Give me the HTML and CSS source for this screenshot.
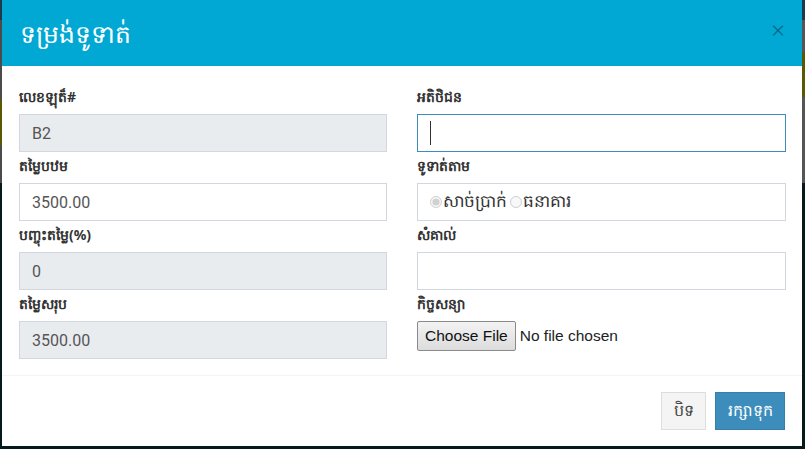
FILE: index.html
```html
<!DOCTYPE html>
<html lang="km">
<head>
<meta charset="utf-8">
<title>ទម្រង់ទូទាត់</title>
<link rel="stylesheet" href="styles.css">
</head>
<body>
<div class="modal">
  <div class="modal-header">
    <h4 class="modal-title">ទម្រង់ទូទាត់</h4>
    <span class="close">×</span>
  </div>
  <div class="modal-body">
    <div class="col">
      <div class="group">
        <label class="lbl">លេខឡុត៏#</label>
        <input class="ctl disabled" type="text" value="B2" disabled>
      </div>
      <div class="group">
        <label class="lbl">តម្លៃបឋម</label>
        <input class="ctl" type="text" value="3500.00">
      </div>
      <div class="group">
        <label class="lbl">បញ្ចុះតម្លៃ(%)</label>
        <input class="ctl disabled" type="text" value="0" disabled>
      </div>
      <div class="group">
        <label class="lbl">តម្លៃសរុប</label>
        <input class="ctl disabled" type="text" value="3500.00" disabled>
      </div>
    </div>
    <div class="col">
      <div class="group">
        <label class="lbl">អតិថិជន</label>
        <div class="focus-wrap">
          <input class="ctl focused" type="text" value="">
          <span class="caret"></span>
        </div>
      </div>
      <div class="group">
        <label class="lbl">ទូទាត់តាម</label>
        <div class="ctl radios">
          <label class="radio"><input type="radio" name="pay" checked disabled>សាច់ប្រាក់</label>
          <label class="radio"><input type="radio" name="pay" disabled>ធនាគារ</label>
        </div>
      </div>
      <div class="group">
        <label class="lbl">សំគាល់</label>
        <input class="ctl" type="text" value="">
      </div>
      <div class="group">
        <label class="lbl">កិច្ចសន្យា</label>
        <div class="file-row">
          <span class="file-btn">Choose File</span>
          <span class="file-text">No file chosen</span>
        </div>
      </div>
    </div>
  </div>
  <div class="modal-footer">
    <button class="btn btn-default">បិទ</button>
    <button class="btn btn-primary">រក្សាទុក</button>
  </div>
</div>
</body>
</html>
```
FILE: styles.css
```css
html, body {
  margin: 0;
  padding: 0;
}
body {
  width: 805px;
  height: 449px;
  overflow: hidden;
  background:
    linear-gradient(to bottom,
      #1d3a4f 0px, #1d3a4f 20px,
      #4b4b4b 20px, #4b4b4b 100px,
      #5b5a02 100px, #5b5a02 145px,
      #4b4b4b 145px, #4b4b4b 183px,
      #061a1c 183px, #061a1c 449px) left top / 2px 100% no-repeat,
    linear-gradient(to bottom,
      #1d3a4f 0px, #1d3a4f 20px,
      #555555 20px, #555555 52px,
      #5b5a02 52px, #5b5a02 97px,
      #555555 97px, #555555 183px,
      #061a1c 183px, #061a1c 449px) right top / 3px 100% no-repeat,
    #061a1c;
  font-family: "Noto Sans", "Liberation Sans", sans-serif;
  color: #333;
}
.modal {
  margin-left: 2px;
  width: 800px;
  height: 446px;
  background: #fff;
  display: flex;
  flex-direction: column;
}
.modal-header {
  height: 66px;
  box-sizing: border-box;
  background: #00a8d3;
  display: flex;
  align-items: center;
  justify-content: space-between;
  padding: 0 17px 0 18px;
}
.modal-title {
  margin: 0;
  font-size: 25px;
  font-weight: normal;
  color: #fff;
  line-height: 30px;
}
.close {
  color: #08495a;
  opacity: .7;
  font-size: 24px;
  line-height: 20px;
  font-weight: 300;
  margin-top: -6px;
}
.modal-body {
  display: grid;
  grid-template-columns: 368px 369px;
  column-gap: 30px;
  padding: 17px 16px 16px 17px;
  border-bottom: 1px solid #f4f4f4;
}
.col {
  display: flex;
  flex-direction: column;
}
.group {
  display: flex;
  flex-direction: column;
}
.lbl {
  font-size: 14px;
  font-weight: bold;
  line-height: 20px;
  padding-top: 4px;
  height: 27px;
  box-sizing: border-box;
  margin-bottom: 4px;
  color: #333;
}
.ctl {
  box-sizing: border-box;
  height: 38px;
  width: 100%;
  margin: 0;
  border: 1px solid #d2d6de;
  border-radius: 0;
  padding: 6px 12px;
  font-family: Roboto, "Noto Sans", sans-serif;
  font-size: 16px;
  color: #555;
  background: #fff;
  outline: none;
}
.ctl.disabled {
  background: #e9ecef;
  -webkit-text-fill-color: #555;
  opacity: 1;
}
.focus-wrap {
  position: relative;
}
.ctl.focused {
  border-color: #3c8dbc;
}
.caret {
  position: absolute;
  left: 13px;
  top: 7px;
  width: 1px;
  height: 24px;
  background: #333;
}
.radios {
  display: flex;
  align-items: center;
  padding: 0 12px;
  font-family: "Liberation Serif", serif;
  font-size: 17px;
  color: #333;
}
.radio {
  display: flex;
  align-items: center;
  margin-right: 3px;
}
.radio input {
  margin: 0 1px 0 0;
  width: 12px;
  height: 12px;
}
.file-row {
  display: flex;
  align-items: center;
  height: 38px;
  padding-bottom: 8px;
  box-sizing: border-box;
}
.file-btn {
  box-sizing: border-box;
  height: 30px;
  padding: 0 7px;
  display: flex;
  align-items: center;
  border: 1px solid #8a8a8a;
  border-radius: 2px;
  background: linear-gradient(#f3f3f3, #dcdcdc);
  font-family: "Liberation Sans", Arial, sans-serif;
  font-size: 15.5px;
  color: #111;
}
.file-text {
  margin-left: 4px;
  font-family: "Liberation Sans", Arial, sans-serif;
  font-size: 15.5px;
  color: #222;
}
.modal-footer {
  display: flex;
  justify-content: flex-end;
  gap: 9px;
  padding: 16px 17px 16px 0;
}
.btn {
  height: 38px;
  box-sizing: border-box;
  border-radius: 0;
  font-family: "Noto Sans", "Liberation Sans", sans-serif;
  font-size: 16px;
  padding: 0 10px;
  cursor: pointer;
}
.btn-default {
  width: 45px;
  background: #f4f4f4;
  border: 1px solid #ddd;
  color: #444;
}
.btn-primary {
  width: 70px;
  background: #3c8dbc;
  border: 1px solid #367fa9;
  color: #fff;
}
```
